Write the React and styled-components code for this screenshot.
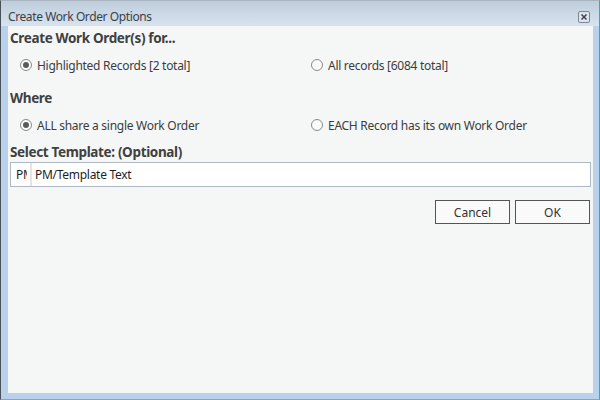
import React from "react";
import styled, { createGlobalStyle } from "styled-components";

const Global = createGlobalStyle`
  html, body { margin: 0; padding: 0; }
  body { font-family: "Noto Sans", "Open Sans", sans-serif; }
`;

const Window = styled.div`
  width: 600px;
  height: 400px;
  box-sizing: border-box;
  display: flex;
  flex-direction: column;
  border-left: 1px solid #4a5058;
  border-top: 1px solid #a8b4c0;
  border-right: 1px solid #2aa8d8;
  border-bottom: 1px solid #3cc4ec;
  background: #b9d1ea;
`;

const TitleBar = styled.div`
  height: 25px;
  box-sizing: border-box;
  flex: none;
  display: flex;
  align-items: center;
  justify-content: space-between;
  padding: 6px 9px 0 7px;
  background: linear-gradient(#bfcddb, #d7e3ef);
  font-size: 12px;
  letter-spacing: -0.4px;
  color: #3a3f4a;
`;

const CloseBox = styled.div`
  width: 10px;
  height: 10px;
  border: 1px solid #7c8594;
  border-radius: 2px;
  background: #dde4ec;
  display: flex;
  align-items: center;
  justify-content: center;
`;

const Frame = styled.div`
  flex: 1;
  display: flex;
  padding: 0 6px 6px 7px;
`;

const Content = styled.div`
  flex: 1;
  background: #f5f7f7;
  padding: 1px 2px 0 2px;
  color: #3c3c3c;
`;

const Heading = styled.div`
  font-weight: bold;
  font-size: 13.5px;
  letter-spacing: -0.35px;
  color: #404040;
  height: 22px;
  line-height: 22px;
`;

const RadioRow = styled.div`
  display: grid;
  grid-template-columns: 291px 1fr;
  padding-left: 10px;
  height: 32px;
  align-items: center;
  margin-bottom: ${(p) => p.$gap || 0}px;
`;

const Option = styled.label`
  display: flex;
  align-items: center;
  gap: 5px;
  font-size: 12px;
  letter-spacing: -0.28px;
  color: #3c3c3c;
`;

const Circle = styled.span`
  width: 10px;
  height: 10px;
  border-radius: 50%;
  border: 1px solid #8a8a8a;
  background: #fbfbfb;
  display: flex;
  align-items: center;
  justify-content: center;
  &::after {
    content: "";
    width: 6px;
    height: 6px;
    border-radius: 50%;
    background: ${(p) => (p.$on ? "#5a5a5a" : "transparent")};
  }
`;

const Field = styled.div`
  margin-top: -1px;
  height: 25px;
  box-sizing: border-box;
  border: 1px solid #aeb8c4;
  background: #fff;
  display: flex;
  align-items: stretch;
  font-size: 12px;
  letter-spacing: -0.28px;
  color: #1e1e1e;
`;

const Prefix = styled.div`
  width: 21px;
  padding-left: 5px;
  box-sizing: border-box;
  border-right: 2px solid #e4e4e4;
  display: flex;
  align-items: center;
  span {
    width: 11px;
    overflow: hidden;
    white-space: nowrap;
  }
`;

const FieldText = styled.div`
  padding-left: 3px;
  display: flex;
  align-items: center;
`;

const Buttons = styled.div`
  display: flex;
  justify-content: flex-end;
  gap: 5px;
  margin-top: 13px;
  padding-right: 1px;
`;

const Button = styled.button`
  width: ${(p) => p.$w}px;
  height: 24px;
  border: 1px solid #555;
  background: #fafafa;
  font-family: inherit;
  font-size: 12px;
  color: #333;
  padding: 0;
`;

function Radio({ on, children }) {
  return (
    <Option>
      <Circle $on={on} />
      {children}
    </Option>
  );
}

export default function App() {
  return (
    <>
      <Global />
      <Window>
        <TitleBar>
          <span>Create Work Order Options</span>
          <CloseBox>
            <svg width="6" height="6" viewBox="0 0 6 6">
              <path d="M0.5 0.5 L5.5 5.5 M5.5 0.5 L0.5 5.5" stroke="#3c4450" strokeWidth="1.5" />
            </svg>
          </CloseBox>
        </TitleBar>
        <Frame>
          <Content>
            <Heading>Create Work Order(s) for...</Heading>
            <RadioRow $gap={6}>
              <Radio on>Highlighted Records [2 total]</Radio>
              <Radio>All records [6084 total]</Radio>
            </RadioRow>
            <Heading>Where</Heading>
            <RadioRow>
              <Radio on>ALL share a single Work Order</Radio>
              <Radio>EACH Record has its own Work Order</Radio>
            </RadioRow>
            <Heading>Select Template: (Optional)</Heading>
            <Field>
              <Prefix>
                <span>PM</span>
              </Prefix>
              <FieldText>PM/Template Text</FieldText>
            </Field>
            <Buttons>
              <Button $w={75}>Cancel</Button>
              <Button $w={75}>OK</Button>
            </Buttons>
          </Content>
        </Frame>
      </Window>
    </>
  );
}
